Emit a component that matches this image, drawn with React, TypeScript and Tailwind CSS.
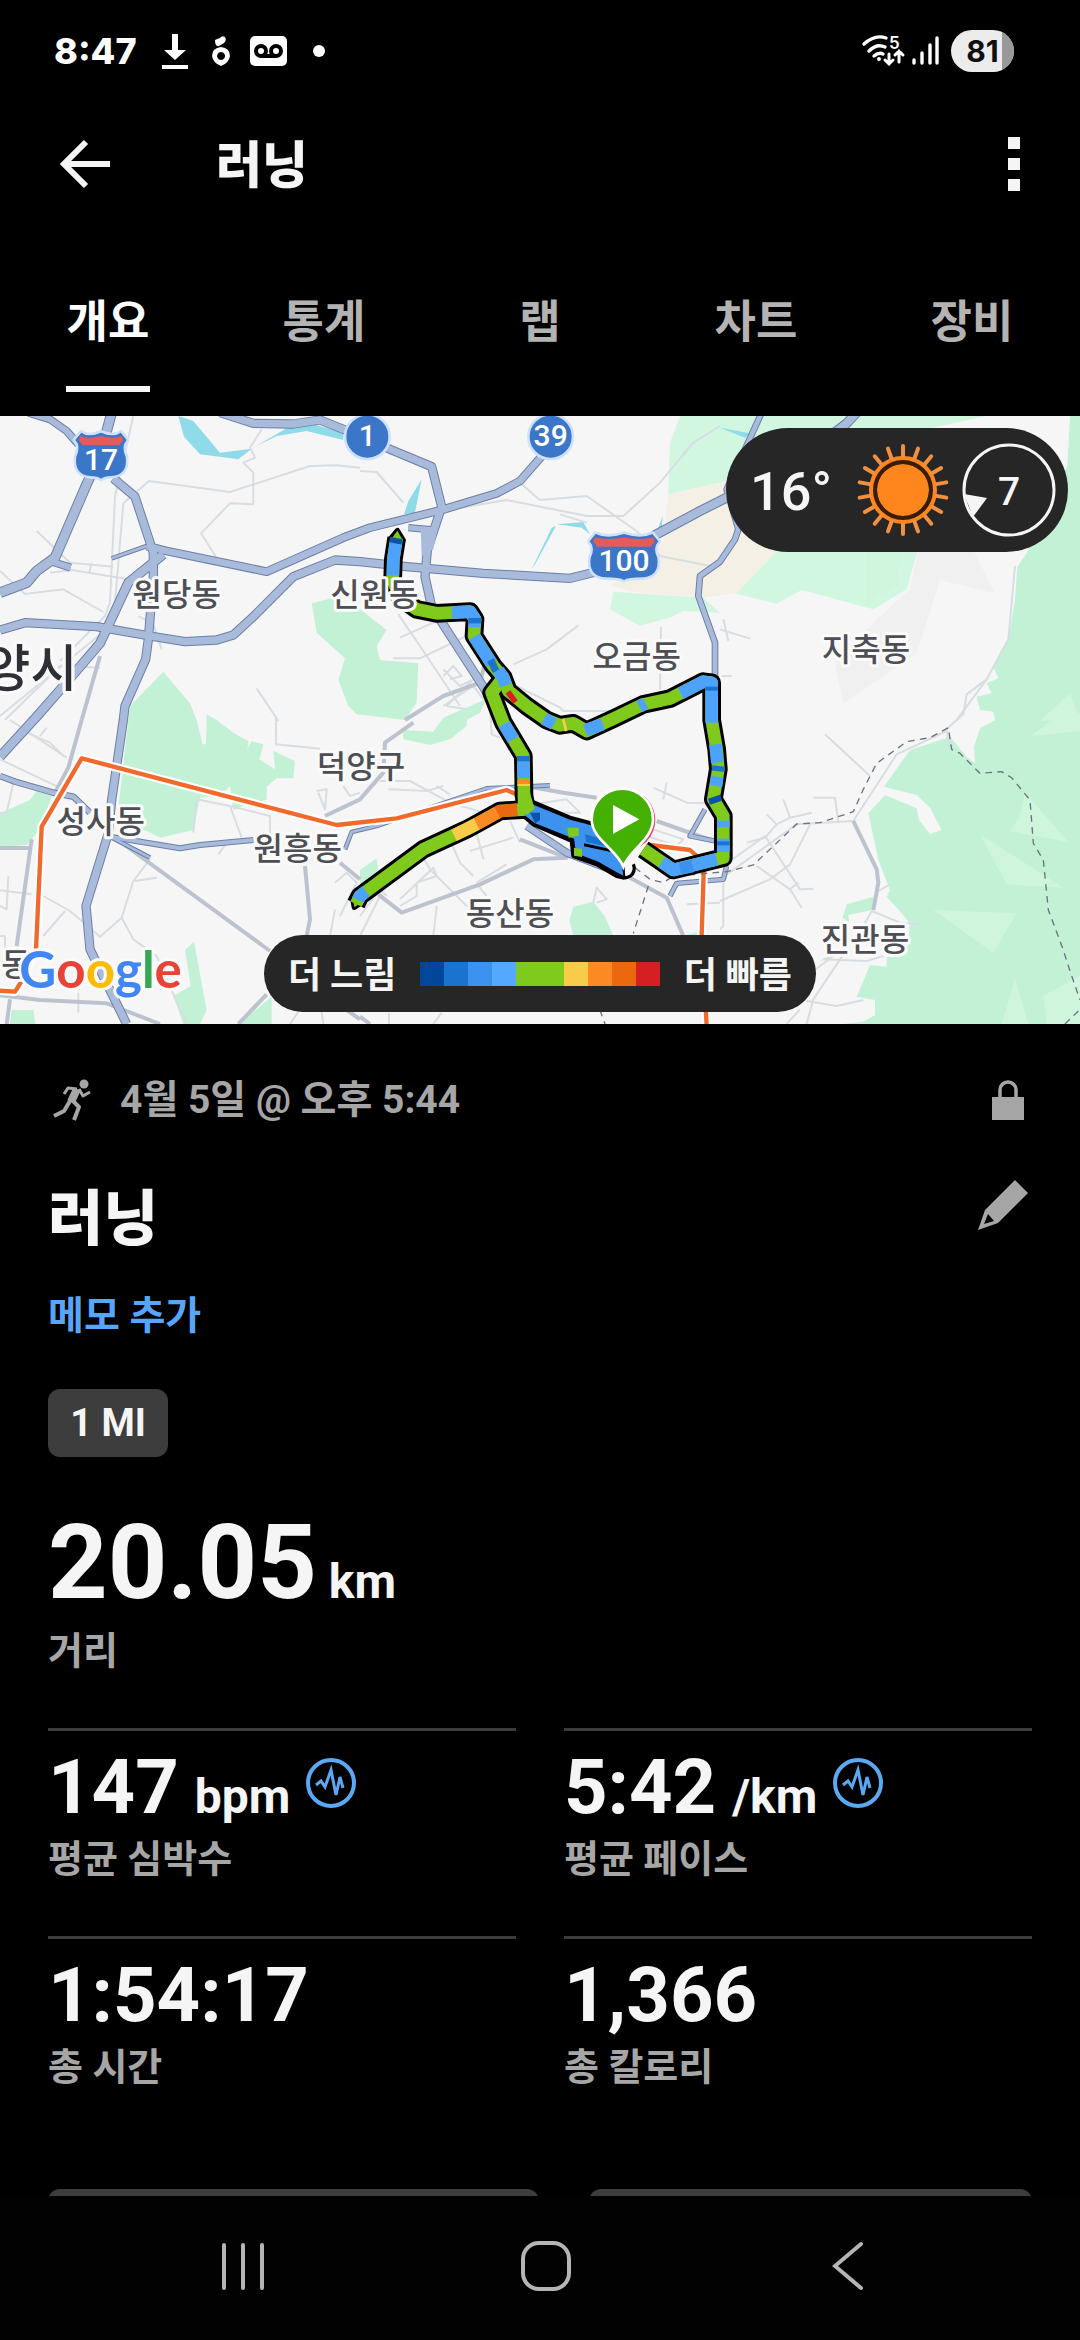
import React from 'react';

const KR = "'Roboto','Noto Sans CJK KR',sans-serif";

const tabs = ['개요', '통계', '랩', '차트', '장비'];

const paceColors = ['#00479b', '#1a73cf', '#3d92ef', '#55a8ff', '#7fca1c', '#7fca1c', '#f9cb4b', '#fb8a25', '#ea6810', '#d51f22'];

const woods = [
  '390,870 490,767 570,862 590,912 608,985 618,985 620,895 650,912 700,950 745,975 742,1000 755,975 790,985 778,1030 825,1060 820,1005 885,1035 880,1087 830,1087 800,1112 800,1152 740,1165 700,1182 690,1110 660,1140 600,1145 580,1242 480,1265 440,1245 350,1220 375,1000',
  '935,562 1000,545 1080,580 1160,642 1130,690 1140,732 1255,742 1250,860 1215,912 1070,895 1045,870 1015,792 1035,727 950,650',
  '0,1192 90,1152 110,1125 160,1130 120,1240 80,1287 0,1292',
  '555,1602 582,1577 620,1782 600,1824 550,1824 520,1740 572,1710',
  '35,1782 100,1782 106,1824 30,1824',
  '815,1742 815,1824 715,1824',
  '1330,905 1460,848 1440,890 1400,912 1400,930 1350,970 1290,987 1210,970 1210,942 1300,947',
  '1720,1472 1780,1457 1815,1502 1840,1560 1720,1560 1708,1512',
  '1080,1362 1130,1327 1135,1362 1080,1412',
  '2050,1560 2090,1548 2090,1560',
  '3210,0 3202,150 3080,412 3052,452 3045,552 3025,672 2980,752 2995,787 2960,802 2975,832 2930,842 2940,882 2980,887 2985,912 2940,937 2922,992 2925,1042 2900,1022 2850,962 2730,1002 2652,1112 2750,1137 2790,1175 2825,1242 2790,1254 2757,1212 2750,1177 2655,1137 2605,1192 2635,1332 2670,1422 2660,1442 2705,1492 2730,1522 2720,1612 2660,1622 2660,1652 2610,1647 2570,1742 2625,1752 2625,1797 2590,1817 2530,1824 3240,1824 3240,0',
  '2540,1465 2620,1442 2625,1480 2545,1497 2548,1520 2528,1505',
  '2460,1635 2500,1610 2490,1630',
];

const meadows = [
  '2040,0 2010,80 2005,235 2160,200 2400,120 2960,0',
  '1840,527 2110,545 2160,590 2050,585 2010,605 1990,610 1920,630 1830,580',
  '2205,532 2340,395 2755,395 2720,520 2620,580 2405,522 2330,563',
];

const facets = [
  '3060,1200 3075,1130 3205,1278 3030,1245',
  '2940,1255 3190,1415 3020,1405',
  '2800,1482 3050,1492 2980,1610',
  '3005,1824 3045,1690 3085,1824',
  '3130,1740 3240,1680 3240,1824 3140,1824',
  '3090,960 3160,912 3240,890 3240,945',
  '3120,915 3210,832 3240,912',
  '2600,410 2705,395 2690,510 2600,560',
];

const streets = [
  '400,0 345,240 330,560 315,600 180,735', '370,262 345,560 320,640 0,900', '370,262 447,195 690,228 930,150 1010,148 1080,155',
  '785,40 750,95 765,125 730,140 760,170 760,265 690,262 603,352 648,422', '110,345 210,440 340,452', '0,465 75,534 190,520 310,588',
  '150,470 215,462 400,492', '275,440 268,470', '415,600 460,625 485,700', '770,817 835,915', '15,912 180,750 300,755',
  '30,912 200,1025', '80,950 150,980 190,1020', '120,960 140,935', '0,1030 190,1120', '40,1100 20,1190 0,1190',
  '0,1423 95,1435', '25,1380 20,1480 0,1470', '130,1440 210,1485 300,1562 365,1505 400,1395 450,1330', '365,1505 400,1570 470,1620 560,1824',
  '130,1560 195,1485', '405,1395 470,1385', '580,1250 590,1150 690,1170 725,1265', '690,1170 810,1200 810,1270', '655,1315 680,1280',
  '0,1560 15,1560 15,1610', '235,1730 235,1790', '828,900 828,985 960,998', '955,1130 975,1180 980,1120 950,1125', '1030,1110 1050,1140 1080,1130',
  '1005,1400 1040,1370 1070,1400 1020,1500', '990,1560 1005,1480', '1080,1500 1140,1420 1160,1440', '1080,1560 1140,1440', '870,1824 900,1780', '960,1760 970,1824',
  '1080,165 1130,168 1210,260', '1320,285 1520,252 1760,300 1870,300 1980,200 2080,80 2160,30', '1565,205 1620,252 1760,240 1910,345 1980,420 2130,450', '1680,295 1760,320',
  '1195,595 1260,690 1380,870', '1200,665 1410,570', '1180,727 1260,727 1400,660', '1330,760 1380,810 1420,790 1340,870 1400,880', '1330,780 1360,750 1385,780 1350,790', '1330,870 1420,810 1450,850',
  '1540,745 1640,700 1735,628', '1530,800 1680,875 1690,885 1850,885', '1983,632 1980,820', '1470,880 1475,955 1500,965',
  '1140,1095 1230,1095 1350,1160 1450,1190', '1165,1120 1280,1125 1330,1110', '1310,1110 1350,1135', '1250,1290 1290,1360 1410,1480', '1340,1250 1380,1340 1420,1380', '1430,1250 1450,1330', '1530,1215 1560,1280',
  '1200,1450 1300,1355 1310,1380 1250,1400 1250,1440 1200,1470', '1410,1305 1540,1265', '1430,1400 1520,1345', '1435,1410 1460,1440', '1300,1560 1310,1470',
  '1620,1162 1700,1150 1740,1190 1660,1190', '1690,1210 1720,1230', '1960,1115 2060,1160 2120,1162', '2000,1100 1990,1150', '1960,1240 2050,1270 2030,1290 1940,1260', '1790,1460 1820,1450 1790,1415 1780,1460',
  '2060,1465 2160,1460', '1167,1790 1167,1824', '1300,1824 1325,1790',
  '2160,640 2250,668', '2170,610 2185,675', '2165,780 2195,780', '3045,450 3035,560 3025,670 2960,790 2900,835 2890,895 2870,912', '2960,790 2870,912 2840,940',
  '2475,955 2610,1080', '2440,1145 2505,1145 2515,1220', '2350,1150 2370,1205 2435,1190', '2300,1195 2330,1225 2370,1205', '2240,1280 2295,1265 2330,1225', '2190,1335 2295,1260 2400,1420 2440,1418',
  '2160,1390 2390,1225 2560,1215 2690,1015 2840,945 2850,1000', '2430,1225 2370,1345 2310,1390 2160,1455', '2270,1350 2370,1420 2405,1475', '2370,1420 2395,1400', '2170,1400 2170,1530 2160,1540',
  '2615,1485 2700,1520 2760,1525', '2615,1485 2590,1530', '2540,1600 2440,1750 2420,1824', '2470,1630 2600,1635 2650,1620', '2420,1755 2510,1770 2590,1752', '2420,1680 2500,1620', '2360,1824 2400,1780', '2635,1425 2670,1405',
];

const avenues = [
  '245,912 205,1055 165,1130', '300,720 245,912', '0,1296 90,1296', '95,1270 50,1590', '0,1738 120,1752 320,1762 480,1824', '20,1824 30,1750',
  '340,1262 810,1605', '915,1350 930,1510 920,1560', '975,1200 1080,1150 1150,1070 1155,980 1240,920', '715,1824 800,1735', '1020,1340 1080,1390',
  '1135,1435 1205,1490 1440,1405 1600,1330 1700,1325 1560,1270', '1215,912 1330,840 1440,800 1460,720', '1080,1802 1110,1824', '1040,1782 1080,1810',
  '1590,1112 1690,1130 1790,1145', '1970,1215 2140,1275', '1890,1385 2000,1445 2050,1560', '2560,1215 2630,1360 2635,1400 2620,1482',
];

const highways = [
  { d: '85,-10 150,10 200,45 235,85', w: 24 },
  { d: '335,-10 300,120 262,200 165,425 110,465 80,500 0,530', w: 32 },
  { d: '150,435 212,455', w: 24 },
  { d: '340,187 405,242 460,410 460,482 445,670 437,730 375,870 370,912 335,1152 325,1252 258,1470 270,1600 380,1824', w: 28 },
  { d: '335,427 440,390', w: 14 },
  { d: '440,390 500,405 800,467 1030,365 1110,335 1325,282 1490,232 1560,195 1630,115', w: 26 },
  { d: '0,642 75,620 290,632 450,660 555,677 650,672 700,657 760,602 880,482 1005,432 1080,437 1220,452 1450,472 1710,487 1790,467', w: 28 },
  { d: '1960,360 2100,285 2160,255 2400,130 2540,22 2570,-10', w: 30 },
  { d: '0,1022 110,902 180,822 300,682 385,500 490,415', w: 30 },
  { d: '660,-10 760,22 880,24 960,12 1080,60 1175,102 1295,152 1325,272 1282,402 1275,482 1295,572 1450,812 1500,900', w: 28 },
  { d: '1225,335 1300,342', w: 22 },
  { d: '2285,-10 2180,220 2215,340 2205,370 2160,437 2100,480 2095,540 2145,680 2145,790', w: 20 },
  { d: '0,1080 45,1097 160,1130 220,1142 270,1190', w: 20 },
  { d: '330,1262 540,1297 600,1287 760,1272', w: 18 },
  { d: '330,1262 450,1325', w: 14 },
  { d: '1035,1300 1055,1248 1130,1230 1460,1117 1650,1108', w: 14 },
  { d: '1580,1230 1700,1310 1870,1375', w: 24 },
  { d: '2115,1180 2070,1260 2170,1280', w: 16 },
  { d: '2010,1440 2030,1402 2170,1390 2180,1350', w: 16 },
];

const route = [
  '1190,366 1180,430 1178,490 1200,545 1250,580 1310,592 1410,587 1425,610 1422,660 1480,750 1510,785 1525,825 1580,870 1640,912 1680,928 1720,922 1760,945 1840,908 1930,865 2010,848 2110,797 2135,800 2135,912 2150,1000 2155,1060 2140,1150 2170,1200 2170,1325 2020,1362 1930,1300',
  '1510,785 1475,830 1510,920 1570,1020 1572,1140 1580,1180 1500,1185 1400,1240 1270,1300 1080,1440 1068,1464',
];

const BLUE = '#4da3fb';
const GREEN = '#7fca1c';
const paceSegments = [
  { c: BLUE, d: '1188,378 1180,430 1179,478' },
  { c: '#0b52a8', d: '1189,366 1186,382' },
  { c: BLUE, d: '1356,590 1410,587 1425,610 1424,634' },
  { c: '#1a73cf', d: '1424,606 1424,622' },
  { c: BLUE, d: '1423,662 1474,742' },
  { c: '#1a73cf', d: '1470,754 1490,744' },
  { c: BLUE, d: '1494,762 1510,785 1518,808' },
  { c: '#d51f22', d: '1528,848 1542,838' },
  { c: BLUE, d: '1632,908 1662,924' },
  { c: '#f9cb4b', d: '1690,928 1698,926' },
  { c: BLUE, d: '1756,943 1808,924' },
  { c: BLUE, d: '1918,872 1936,862' },
  { c: BLUE, d: '2042,832 2110,797 2135,800 2135,920' },
  { c: '#1a73cf', d: '2135,812 2135,824' },
  { c: BLUE, d: '2146,985 2152,1040' },
  { c: '#1a73cf', d: '2156,1050 2154,1066' },
  { c: BLUE, d: '2152,1082 2148,1110' },
  { c: '#0b52a8', d: '2142,1142 2148,1160' },
  { c: BLUE, d: '2170,1214 2170,1234' },
  { c: BLUE, d: '2170,1268 2170,1308' },
  { c: '#1a73cf', d: '2170,1276 2170,1288' },
  { c: BLUE, d: '2150,1330 2020,1362 1985,1338' },
  { c: '#3d92ef', d: '2078,1350 2040,1358' },
  { c: BLUE, d: '1512,924 1540,970' },
  { c: BLUE, d: '1570,1036 1571,1086' },
  { c: '#1a73cf', d: '1570,1020 1570,1036' },
  { c: '#fb8a25', d: '1571,1092 1571,1104' },
  { c: '#f9cb4b', d: '1571,1104 1571,1110' },
  { c: '#ea6810', d: '1552,1181 1500,1185 1490,1191' },
  { c: '#fb8a25', d: '1492,1190 1428,1225' },
  { c: '#f9cb4b', d: '1430,1224 1362,1258' },
  { c: BLUE, d: '1098,1426 1080,1440 1074,1452' },
];

const places = [
  ['원당동', 530, 571], ['신원동', 1123, 571], ['오금동', 1910, 755], ['지축동', 2598, 735], ['덕양구', 1083, 1085],
  ['성사동', 302, 1251], ['원흥동', 893, 1333], ['동산동', 1530, 1528], ['진관동', 2595, 1604],
] as const;

const Lines = ({ items, color, width }: { items: string[]; color: string; width: number }) => (
  <g fill="none" stroke={color} strokeWidth={width} strokeLinejoin="round">
    {items.map((d) => <polyline key={d} points={d} />)}
  </g>
);

const Areas = ({ items, color }: { items: string[]; color: string }) => (
  <g fill={color}>{items.map((d) => <polygon key={d} points={d} />)}</g>
);

const Interstate = ({ x, y, w, label }: { x: number; y: number; w: number; label: string }) => {
  const h = w / 2;
  const body = `M${x - h + 18} ${y + 2} Q${x - h / 2} ${y + 18} ${x} ${y + 2} Q${x + h / 2} ${y + 18} ${x + h - 18} ${y + 2} L${x + h} ${y + 24} Q${x + h - 18} ${y + 44} ${x + h - 3} ${y + 74} Q${x + h + 4} ${y + 128} ${x + h - 46} ${y + 132} Q${x + 10} ${y + 132} ${x} ${y + 140} Q${x - 10} ${y + 132} ${x - h + 46} ${y + 132} Q${x - h - 4} ${y + 128} ${x - h + 3} ${y + 74} Q${x - h + 18} ${y + 44} ${x - h} ${y + 24} Z`;
  return (
    <g>
      <path d={body} fill="#3b76c8" stroke="#cfe1ff" strokeWidth={16} strokeLinejoin="round" paintOrder="stroke" />
      <path d={`M${x - h + 16} ${y + 12} Q${x - h / 2} ${y + 22} ${x} ${y + 12} Q${x + h / 2} ${y + 22} ${x + h - 16} ${y + 12} L${x + h - 10} ${y + 24} L${x + h - 22} ${y + 40} H${x - h + 22} L${x - h + 10} ${y + 24} Z`} fill="#e25c5c" />
      <text x={x} y={y + 114} textAnchor="middle" fontSize={90} fontWeight={500} fill="#fff">{label}</text>
    </g>
  );
};

const RouteShield = ({ x, label }: { x: number; label: string }) => (
  <g>
    <circle cx={x} cy={62} r={67} fill="#3b76c8" stroke="#cfe1ff" strokeWidth={8} />
    <text x={x} y={91} textAnchor="middle" fontSize={90} fontWeight={500} fill="#fff">{label}</text>
  </g>
);

const RouteMap = () => (
  <svg viewBox="0 0 3240 1824" className="block w-full" fontFamily={KR} role="img" aria-label="러닝 경로 지도">
    <rect width="3240" height="1824" fill="#f6f6f6" />
    <polygon points="2505,742 2530,862 2750,712 2820,492 2985,532 2920,402 2755,395 2730,520 2620,620" fill="#f0f0f0" />
    <Areas items={meadows} color="#d2f7e0" />
    <polygon points="2005,235 2160,200 2560,150 2335,400 2210,532 2110,545 1920,530 1830,510 1990,380" fill="#f5f0e6" />
    <Areas items={woods} color="#c3f1d6" />
    <Areas items={facets} color="#cff6dc" />
    <g fill="#8fdbe9">
      <polygon points="535,0 580,15 660,110 755,98 715,130 600,115 552,62" />
      <polygon points="760,95 880,25 940,25 1030,50 1030,72 920,45 830,60" />
      <polygon points="1265,190 1245,290 1212,295 1225,255" />
      <polygon points="1595,460 1655,335 1668,330 1605,445" />
      <polygon points="1670,325 1750,318 1770,355 1745,335" />
      <polygon points="1975,335 1988,300 1985,340" />
      <polygon points="2160,35 2250,52 2235,65" />
    </g>
    <Lines items={streets} color="#d8dde2" width={6} />
    <Lines items={avenues} color="#bcc3cf" width={12} />

    <g fill="none" stroke="#6d7fa6" strokeLinejoin="round">
      {highways.map((h) => <polyline key={h.d} points={h.d} strokeWidth={h.w} />)}
    </g>
    <g fill="none" stroke="#a9bbdb" strokeLinejoin="round">
      {highways.map((h) => <polyline key={h.d} points={h.d} strokeWidth={h.w - 6} />)}
    </g>
    <polygon points="1262,335 1312,340 1300,400 1265,420" fill="#a9bbdb" />

    {/* subway line */}
    <g fill="none" strokeLinejoin="round">
      {['-5,1724 45,1727 62,1700 108,1600 125,1232 245,1027 1010,1227 1190,1207 1520,1122 1555,1138', '1950,1287 2070,1302 2112,1340 2105,1557 2120,1830'].map((d) => (
        <g key={d}>
          <polyline points={d} stroke="#fff" strokeWidth={26} />
          <polyline points={d} stroke="#f2692c" strokeWidth={13} />
        </g>
      ))}
    </g>

    {/* district border */}
    <g fill="none" stroke="#6b7280" strokeWidth={4} strokeDasharray="20 16">
      <polyline points="1905,1355 1950,1390 1990,1400 2020,1380 2180,1367 2260,1347 2390,1224 2460,1220 2560,1187 2590,1120 2630,1042 2720,977 2790,965 2845,935 2855,1000 2880,1012 2940,1072 3005,1067 3035,1085 3090,1152 3100,1282 3130,1332 3145,1482 3190,1602 3205,1650 3240,1752" />
      <polyline points="1945,1410 1900,1552" />
      <polyline points="1800,1782 1815,1824" />
      <polyline points="3195,1824 3240,1780" />
    </g>

    {/* recorded track */}
    <g strokeLinejoin="round">
      <polygon points="1580,1150 1710,1205 1860,1245 1870,1385 1850,1380 1790,1345 1720,1320 1715,1275 1600,1225 1570,1200" fill="#000" stroke="#000" strokeWidth={12} />
      <polygon points="1192,344 1172,368 1209,372" fill={GREEN} stroke="#000" strokeWidth={16} />
      <polygon points="1058,1446 1063,1474 1090,1456" fill={GREEN} stroke="#000" strokeWidth={16} />
      <Lines items={route} color="#000" width={56} />
      <Lines items={route} color={GREEN} width={38} />
      <polygon points="1192,344 1172,372 1209,374" fill={GREEN} />
      <polygon points="1058,1440 1063,1474 1096,1450" fill={GREEN} />
      {paceSegments.map((s) => (
        <polyline key={s.d} points={s.d} fill="none" stroke={s.c} strokeWidth={38} />
      ))}
      <polygon points="1580,1158 1710,1211 1860,1250 1860,1300 1870,1380 1795,1337 1728,1312 1722,1268 1605,1222 1572,1196" fill="#3d92ef" />
      <path d="M1755 1255 L1860 1282 L1860 1300 L1758 1278 Z" fill="#1a73cf" />
      <path d="M1752 1282 L1860 1306 L1860 1314 L1752 1291 Z" fill="#000" />
      <path d="M1590 1190 h30 v22 l-14 10 z" fill="#0b52a8" />
      <path d="M1702 1235 h34 v24 l-30 6 z M1722 1295 l24 4 v24 l-24 -4 z" fill={GREEN} />
      <path d="M1554 1130 L1590 1130 L1604 1178 L1580 1196 L1552 1188 Z" fill={GREEN} />
      <path d="M1900 1345 a28 28 0 0 1 -45 32" fill="none" stroke="#000" strokeWidth={10} />
    </g>

    <Interstate x={303} y={48} w={154} label="17" />
    <Interstate x={1872} y={352} w={206} label="100" />
    <RouteShield x={1102} label="1" />
    <RouteShield x={1652} label="39" />

    <g textAnchor="middle" fontSize={96} fontWeight={500} fill="#4d4f54" stroke="#fafafa" strokeWidth={18} strokeLinejoin="round" paintOrder="stroke">
      {places.map(([name, x, y]) => <text key={name} x={x} y={y}>{name}</text>)}
      <text x={48} y={1681}>동</text>
    </g>
    <text x={232} y={812} textAnchor="end" fontSize={153} fontWeight={500} fill="#2e3035" stroke="#fafafa" strokeWidth={20} strokeLinejoin="round" paintOrder="stroke">양시</text>

    <text x={58} y={1716} fontSize={153} fontFamily="Lato,sans-serif" fontWeight={700} stroke="#fafafa" strokeWidth={18} strokeLinejoin="round" paintOrder="stroke">
      <tspan fill="#4285f4">G</tspan>
      <tspan fill="#ea4335">o</tspan>
      <tspan fill="#fbbc05">o</tspan>
      <tspan fill="#4285f4">g</tspan>
      <tspan fill="#34a853">l</tspan>
      <tspan fill="#ea4335">e</tspan>
    </text>

    {/* start pin */}
    <circle cx="1874" cy="1212" r="92" fill="#e8436e" />
    <path d="M1870 1352 C1850 1300 1775 1270 1775 1210 a92 92 0 0 1 184 0 C1959 1270 1890 1300 1870 1352 Z" fill="#43b002" stroke="#fff" strokeWidth={8} />
    <path d="M1839 1167 L1918 1210 L1839 1254 Z" fill="#fff" />
  </svg>
);

const Sun = () => (
  <svg viewBox="-47 -47 94 94" className="size-[94px]" aria-label="맑음">
    <circle r="26" fill="#ff861d" />
    <circle r="28" fill="none" stroke="#3b1d05" strokeWidth="4" />
    <circle r="32" fill="none" stroke="#ff861d" strokeWidth="4" />
    {Array.from({ length: 18 }, (_, i) => (
      <line key={i} y1="-34" y2="-44" stroke="#f09040" strokeWidth="4" strokeLinecap="round" transform={`rotate(${i * 20})`} />
    ))}
  </svg>
);

const Weather = () => (
  <div className="absolute right-3 top-3 flex h-[124px] items-center rounded-full bg-[#262626] pl-6 pr-3 text-[#f5f5f5]">
    <span className="w-[82px] pt-1 text-[54px] font-medium leading-none">16°</span>
    <span className="ml-6"><Sun /></span>
    <span className="relative ml-3 flex size-[94px] items-center justify-center">
      <svg viewBox="0 0 94 94" className="absolute inset-0">
        <circle cx="47" cy="47" r="45" fill="none" stroke="#f5f5f5" strokeWidth="3" />
        <path d="M2 51 L25 55 L11 74 Z" fill="#f5f5f5" />
      </svg>
      <span className="pt-1 text-[39px] font-medium leading-none">7</span>
    </span>
  </div>
);

const PaceLegend = () => (
  <div className="absolute bottom-3 left-1/2 flex h-[77px] w-[552px] -translate-x-1/2 items-center justify-between whitespace-nowrap rounded-full bg-[#262626] px-6 text-[36px] font-bold leading-none text-[#f5f5f5]">
    <span className="pt-1">더 느림</span>
    <span className="flex h-6">
      {paceColors.map((c, i) => <span key={i} className="w-6" style={{ backgroundColor: c }} />)}
    </span>
    <span className="pt-1">더 빠름</span>
  </div>
);

const StatusBar = () => (
  <div className="flex h-[102px] shrink-0 items-center justify-between pl-[54px] pr-[66px] text-white">
    <div className="flex items-center">
      <span className="w-[84px] font-['Inter'] text-[36px] font-extrabold leading-none">8:47</span>
      <svg viewBox="0 0 26 36" className="ml-6 h-9 w-[26px]" fill="#fff">
        <path d="M10 1h6v16h8L13 27 2 17h8zM0 32h26v4H0z" />
      </svg>
      <svg viewBox="0 0 18 32" className="ml-6 h-8 w-[18px]" fill="#fff">
        <path fillRule="evenodd" d="M3 5 Q5 4 8 3 Q10 0 13 2 Q15 5 12 8 L7 11 Q3 12 3 5Z M9 12 Q18 13 18 21 Q17 28 9 31 Q1 28 0 21 Q0 13 9 12Z M9 17 a4 4 0 1 0 .1 0Z" />
      </svg>
      <svg viewBox="0 0 37 30" className="ml-5 h-[30px] w-[37px]">
        <rect width="37" height="30" rx="5" fill="#fff" />
        <g fill="none" stroke="#000" strokeWidth="4">
          <circle cx="11" cy="15" r="5" />
          <circle cx="26" cy="15" r="5" />
          <path d="M11 20h15" />
        </g>
      </svg>
      <span className="ml-[26px] size-3 rounded-full bg-white" />
    </div>
    <div className="flex items-center">
      <svg viewBox="0 0 42 32" className="h-8 w-[42px] overflow-visible" fill="none" stroke="#fff" strokeWidth="3.4" strokeLinecap="round">
        <path d="M2 9 Q13 -1 24 3M7 16 Q15 8 23 12M12 21 Q17 17 21 19" />
        <circle cx="17" cy="24" r="1.2" fill="#fff" strokeWidth="1.5" />
        <path d="M27 19v10m-4-4 4 4 4-4M37 27V16m-4 4 4-4 4 4" strokeWidth="3" />
        <text x="27" y="14" fontFamily="Inter" fontSize="17" fontWeight="600" fill="#fff" stroke="none">5</text>
      </svg>
      <svg viewBox="0 0 27 30" className="ml-2 h-[30px] w-[27px]" stroke="#fff" strokeWidth="3.4" strokeLinecap="round">
        <path d="M2 24v3M10 17v10M18 9v18" />
        <path d="M25 2v25" />
      </svg>
      <span className="relative ml-3 flex h-[42px] w-[63px] items-center justify-center overflow-hidden rounded-full bg-[#ececec]">
        <span className="absolute inset-y-0 right-0 w-3 bg-[#999]" />
        <span className="relative font-['Inter'] text-[30px] font-bold leading-none text-[#101010]">81</span>
      </span>
    </div>
  </div>
);

const SensorIcon = () => (
  <svg viewBox="0 0 50 50" className="size-[50px]" fill="none" stroke="#5ba8f5" strokeWidth="4">
    <circle cx="25" cy="25" r="23" />
    <path d="M10 27 L15 23 L19 29 L25 12 L30 37 L34 19 L37 30" strokeWidth="3" />
  </svg>
);

const Stat = ({ value, unit, label }: { value: string; unit?: string; label: string }) => (
  <div className="border-t-3 border-[#3d3d3d] pt-4">
    <div className="flex h-20 items-center">
      <div className="flex items-baseline text-[76px] font-bold leading-[80px]">
        {value}
        {unit && <span className="ml-4 text-[48px] font-bold leading-none">{unit}</span>}
      </div>
      {unit && <button className="-mt-2 ml-4" aria-label="센서 정보"><SensorIcon /></button>}
    </div>
    <p className="mt-2 text-[38px] font-bold leading-[48px] text-[#a6a6a6]">{label}</p>
  </div>
);

const App = () => {
  return (
    <div className="flex h-screen flex-col overflow-hidden bg-black font-['Roboto','Noto_Sans_CJK_KR',sans-serif] text-[#f5f5f5]">
      <StatusBar />

      <header className="flex h-[124px] shrink-0 items-center px-[60px]">
        <button aria-label="뒤로">
          <svg viewBox="0 0 50 50" className="size-[50px]" fill="none" stroke="#f5f5f5" strokeWidth="6">
            <path d="M50 25H6M26 3 4 25l22 22" />
          </svg>
        </button>
        <h1 className="ml-[106px] flex-1 pt-1 text-[50px] font-black leading-none">러닝</h1>
        <button aria-label="메뉴" className="flex flex-col gap-[9px]">
          <span className="size-3 bg-[#f5f5f5]" />
          <span className="size-3 bg-[#f5f5f5]" />
          <span className="size-3 bg-[#f5f5f5]" />
        </button>
      </header>

      <nav className="grid h-[190px] shrink-0 grid-cols-5">
        {tabs.map((tab, i) => (
          <button key={tab} className={`relative pt-1 text-[45px] font-bold ${i === 0 ? 'text-white' : 'text-[#b3b3b3]'}`}>
            {tab}
            {i === 0 && <span className="absolute bottom-6 left-1/2 h-[6px] w-[84px] -translate-x-1/2 bg-[#f5f5f5]" />}
          </button>
        ))}
      </nav>

      <section className="relative shrink-0">
        <RouteMap />
        <Weather />
        <PaceLegend />
      </section>

      <main className="min-h-0 flex-1 overflow-hidden px-12 pt-12">
        <div className="flex h-14 items-center text-[#a6a6a6]">
          <svg viewBox="0 0 40 42" className="ml-1 h-[42px] w-10" fill="none" stroke="currentColor" strokeLinejoin="round">
            <circle cx="32" cy="5" r="4.5" fill="currentColor" stroke="none" />
            <path d="M12 15 L16 9 L25 10" strokeWidth="3" />
            <path d="M25 10 L19 23" strokeWidth="8" />
            <path d="M27 10 L31 17 L38 13" strokeWidth="3" />
            <path d="M20 21 L27 28 L22 41" strokeWidth="4" />
            <path d="M18 22 L12 32 L2 37" strokeWidth="4" />
          </svg>
          <span className="ml-7 flex-1 text-[39px] font-bold leading-[56px]">4월 5일 @ 오후 5:44</span>
          <svg viewBox="0 0 32 40" className="mr-2 h-10 w-8" aria-label="비공개">
            <path d="M0 17h32v23H0z" fill="currentColor" />
            <path d="M8 18V10a8 8 0 0 1 16 0v8" fill="none" stroke="currentColor" strokeWidth="3.5" />
          </svg>
        </div>

        <div className="mt-14 flex items-start justify-between">
          <h2 className="text-[60px] font-black leading-[72px]">러닝</h2>
          <button aria-label="편집" className="-mt-1 mr-1">
            <svg viewBox="0 0 50 50" className="size-[50px]" fill="#a6a6a6">
              <path fillRule="evenodd" d="M37 0 L50 13 L20 43 L0 50 L7 30 Z M10 34 L6 44 L16 41 Z" />
            </svg>
          </button>
        </div>

        <a href="#memo" className="mt-9 block w-fit text-[39px] font-bold leading-[48px] text-[#58a6fb]">메모 추가</a>

        <span className="mt-[49px] flex h-[68px] w-[120px] items-center justify-center rounded-xl bg-[#3d3d3d] text-[38px] font-bold">1 MI</span>

        <div className="mt-[50px] flex items-baseline text-[104px] font-bold leading-[112px]">
          20.05<span className="ml-3 text-[48px] font-bold leading-none">km</span>
        </div>
        <p className="mt-2 text-[38px] font-bold leading-[48px] text-[#a6a6a6]">거리</p>

        <div className="mt-[53px] grid grid-cols-2 gap-x-12 gap-y-[53px]">
          <Stat value="147" unit="bpm" label="평균 심박수" />
          <Stat value="5:42" unit="/km" label="평균 페이스" />
          <Stat value="1:54:17" label="총 시간" />
          <Stat value="1,366" label="총 칼로리" />
        </div>

        <div className="mt-[98px] grid grid-cols-[490fr_442fr] gap-x-[50px]">
          <div className="h-40 rounded-xl bg-[#3d3d3d]" />
          <div className="h-40 rounded-xl bg-[#3d3d3d]" />
        </div>
      </main>

      <footer className="flex h-36 shrink-0 items-center justify-between bg-[#020202] pb-1 pl-[216px] pr-[205px]">
        <button aria-label="최근 앱" className="flex w-[54px] justify-center">
          <svg viewBox="0 0 54 50" className="h-[50px] w-[54px]" stroke="#b5b5b5" strokeWidth="4" strokeLinecap="round">
            <path d="M8 4v43M27 4v43M46 4v43" />
          </svg>
        </button>
        <button aria-label="홈" className="flex w-[54px] justify-center">
          <svg viewBox="0 0 50 50" className="size-[50px]" fill="none" stroke="#b5b5b5" strokeWidth="4">
            <rect x="2" y="2" width="46" height="46" rx="16" />
          </svg>
        </button>
        <button aria-label="뒤로 가기" className="flex w-[54px] justify-center">
          <svg viewBox="0 0 32 50" className="h-[50px] w-8" fill="none" stroke="#b5b5b5" strokeWidth="4" strokeLinecap="round">
            <path d="M29 3 L3 25 L29 47" />
          </svg>
        </button>
      </footer>
    </div>
  );
};

export default App;
